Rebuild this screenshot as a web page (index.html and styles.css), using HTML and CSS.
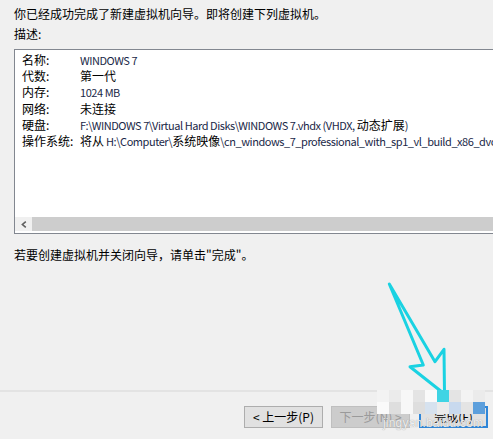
FILE: index.html
```html
<!DOCTYPE html>
<html lang="zh-CN">
<head>
<meta charset="utf-8">
<title>新建虚拟机向导</title>
<link rel="stylesheet" href="styles.css">
</head>
<body>
<div class="page">
  <div class="main">
    <p class="intro">你已经成功完成了新建虚拟机向导。即将创建下列虚拟机。</p>
    <p class="desc-label">描述:</p>
    <div class="listbox">
      <div class="rows">
        <div class="row"><span class="k">名称:</span><span class="v"><span class="lat">WINDOWS 7</span></span></div>
        <div class="row"><span class="k">代数:</span><span class="v">第一代</span></div>
        <div class="row"><span class="k">内存:</span><span class="v"><span class="lat">1024 MB</span></span></div>
        <div class="row"><span class="k">网络:</span><span class="v">未连接</span></div>
        <div class="row"><span class="k">硬盘:</span><span class="v"><span class="lat">F:\WINDOWS 7\Virtual Hard Disks\WINDOWS 7.vhdx (VHDX, </span>动态扩展<span class="lat">)</span></span></div>
        <div class="row"><span class="k">操作系统:</span><span class="v">将从<span class="lat"> H:\Computer\</span>系统映像<span class="lat">\cn_windows_7_professional_with_sp1_vl_build_x86_dvd_u_677939.iso </span>安装操作系统。</span></div>
      </div>
      <div class="hscroll">
        <div class="sb-arrow">
          <svg width="6" height="7" viewBox="0 0 6 7"><path d="M4.8 0.6 L1.4 3.5 L4.8 6.4" fill="none" stroke="#606060" stroke-width="1.6"/></svg>
        </div>
        <div class="sb-thumb"></div>
      </div>
    </div>
    <p class="note">若要创建虚拟机并关闭向导，请单击"完成"。</p>
  </div>
  <div class="footer">
    <button class="btn btn-prev">&lt; 上一步(P)</button>
    <button class="btn btn-next" disabled>下一步(N) &gt;</button>
    <button class="btn btn-finish">完成(F)</button>
  </div>

  <svg class="annot" width="493" height="439" viewBox="0 0 493 439">
    <polygon points="389.3,284 423.3,365 410,366.7 444.5,394 444,349.3 435,361.7" fill="none" stroke="#1ad2e2" stroke-width="3" stroke-linejoin="round"/>
  </svg>

  <div class="mosaic">
    <i class="m1"></i><i class="m2"></i><i class="m3"></i><i class="m4"></i><i class="m5"></i><i class="mc"></i><i class="m4"></i><i class="m1"></i><i class="m2"></i>
    <i class="m5"></i><i class="m6"></i><i class="m3"></i><i class="m6"></i><i class="mb1"></i><i class="m2"></i><i class="mb2"></i><i class="m4"></i><i class="mb3"></i>
  </div>
  <div class="watermark">jingyan.baidu.com</div>
</div>
</body>
</html>
```

FILE: styles.css
```css
html, body {
  margin: 0;
  padding: 0;
  background: #f0f0f0;
}

body {
  font-family: "Noto Sans CJK SC", sans-serif;
  font-size: 12px;
  color: #000;
}

.page {
  position: relative;
  width: 493px;
  height: 439px;
  overflow: hidden;
  display: flex;
  flex-direction: column;
}

.main {
  padding: 6px 0 0 14px;
}

.intro,
.desc-label,
.note {
  margin: 0;
  line-height: 16px;
  white-space: nowrap;
}

.desc-label {
  margin-top: 4px;
}

.listbox {
  margin-top: 7px;
  width: 540px;
  background: #fff;
  border: 1px solid #828790;
}

.rows {
  height: 165px;
  padding-top: 2px;
  padding-left: 7px;
}

.row {
  display: flex;
  align-items: baseline;
  line-height: 16.2px;
  white-space: nowrap;
}

.k {
  width: 58px;
  flex: none;
}

.v {
  color: #000;
}

.lat {
  font-size: 11px;
  letter-spacing: -0.45px;
  color: #1a2848;
}

.hscroll {
  display: flex;
  height: 14px;
  margin-bottom: 2px;
}

.sb-arrow {
  width: 17px;
  background: #f0f0f0;
  display: flex;
  align-items: center;
  justify-content: center;
}

.sb-thumb {
  flex: 1;
  background: #cdcdcd;
}

.note {
  margin-top: 13px;
}

.footer {
  margin-top: auto;
  border-top: 2px solid #e3e3e3;
  padding: 14px 5px 11px 0;
  display: flex;
  justify-content: flex-end;
  gap: 8px;
}

.btn {
  box-sizing: border-box;
  height: 22px;
  width: 79px;
  padding: 0;
  font-family: "Noto Sans CJK SC", sans-serif;
  font-size: 12px;
  line-height: 1;
  color: #000;
  background: #e1e1e1;
  border: 1px solid #adadad;
}

.btn-next {
  background: #cccccc;
  border-color: #bfbfbf;
  color: #9a9a9a;
}

.btn-finish {
  width: 69px;
  margin-left: 1px;
  border: 2px solid #2f86d8;
}

.annot {
  position: absolute;
  left: 0;
  top: 0;
  pointer-events: none;
}

.mosaic {
  position: absolute;
  left: 377px;
  top: 390px;
  display: grid;
  grid-template-columns: repeat(9, 12px);
  grid-auto-rows: 12px;
}

.mosaic i { display: block; }
.m1 { background: #f3f3f3; }
.m2 { background: #ebebeb; }
.m3 { background: #f7f7f7; }
.m4 { background: #e4e4e4; }
.m5 { background: #fafafa; }
.m6 { background: #dedede; }
.mc { background: #3fd4e4; }
.mb1 { background: #d6e2ef; }
.mb2 { background: #c8d9ee; }
.mb3 { background: #5c9fdc; }

.watermark {
  position: absolute;
  left: 383px;
  top: 416px;
  font-family: "Liberation Sans", sans-serif;
  font-size: 12px;
  color: rgba(255, 255, 255, 0.85);
  text-shadow: 0 0 1px #8a8a8a;
  letter-spacing: 0.2px;
}
```
